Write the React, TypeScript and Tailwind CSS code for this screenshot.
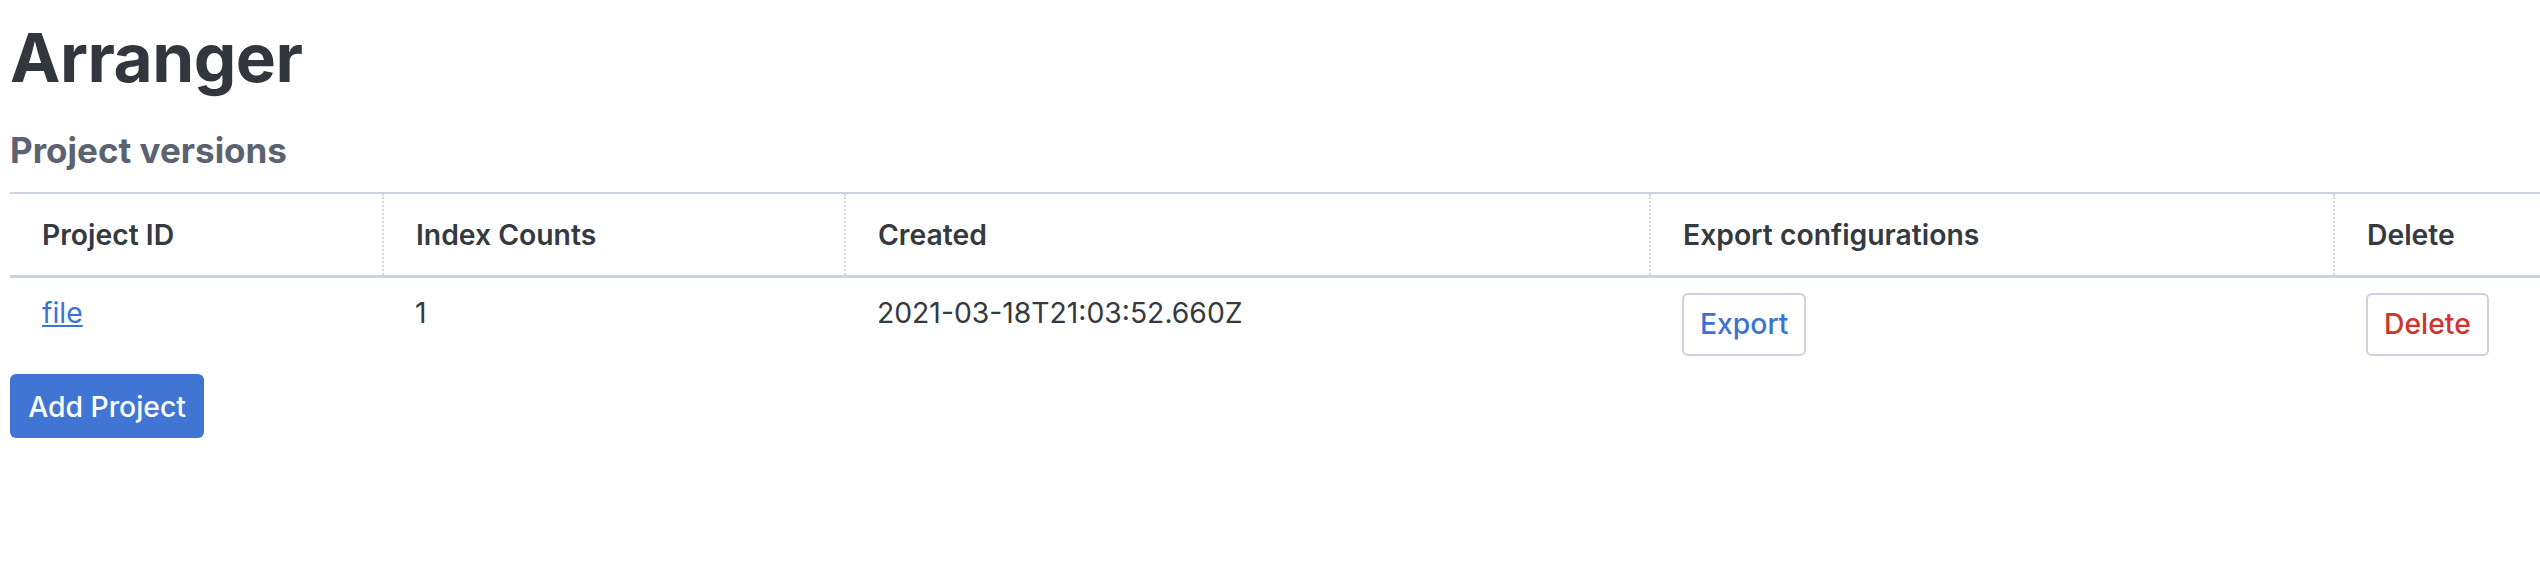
import React from "react";

export default function App() {
  const font = { fontFamily: "Inter, 'Noto Sans', sans-serif" };
  return (
    <div className="min-h-[568px] w-[2540px] bg-white text-[#343a40]" style={font}>
      <div className="pl-[10px] pt-[18px]">
        <h1 className="text-[67.5px] font-bold leading-[79px] tracking-[-0.5px] text-[#33373d]">Arranger</h1>
        <h2 className="mt-[33px] text-[35px] font-bold leading-[41px] text-[#5b6271]">Project versions</h2>
        <table className="mt-[21px] w-[2530px] border-collapse text-[28.3px] leading-[41px]">
          <thead>
            <tr className="border-t-[2px] border-b-[3px] border-[#cbd3e0]">
              <th className="w-[373px] px-[32px] pt-[21px] pb-[19px] text-left font-semibold">Project ID</th>
              <th className="w-[462px] border-l-[2px] border-dotted border-[#cfd6e2] px-[32px] pt-[21px] pb-[19px] text-left font-semibold">Index Counts</th>
              <th className="w-[805px] border-l-[2px] border-dotted border-[#cfd6e2] px-[32px] pt-[21px] pb-[19px] text-left font-semibold">Created</th>
              <th className="w-[684px] border-l-[2px] border-dotted border-[#cfd6e2] px-[32px] pt-[21px] pb-[19px] text-left font-semibold">Export configurations</th>
              <th className="border-l-[2px] border-dotted border-[#cfd6e2] px-[32px] pt-[21px] pb-[19px] text-left font-semibold">Delete</th>
            </tr>
          </thead>
          <tbody>
            <tr>
              <td className="px-[32px] pt-[15px] pb-[15px] align-top">
                <a href="#" className="text-[#3b73d3] underline">file</a>
              </td>
              <td className="px-[32px] pt-[15px] pb-[15px] align-top">1</td>
              <td className="px-[32px] pt-[15px] pb-[15px] align-top">2021-03-18T21:03:52.660Z</td>
              <td className="px-[32px] pt-[15px] pb-[15px] align-top">
                <button className="h-[63px] rounded-[6px] border-[2px] border-[#cbd3e0] bg-white px-[16px] font-medium leading-[59px] text-[#3b73d3]">Export</button>
              </td>
              <td className="px-[32px] pt-[15px] pb-[15px] align-top">
                <button className="h-[63px] rounded-[6px] border-[2px] border-[#cbd3e0] bg-white px-[16px] font-medium leading-[59px] text-[#d0342c]">Delete</button>
              </td>
            </tr>
          </tbody>
        </table>
        <button className="mt-[3px] h-[64px] w-[194px] rounded-[6px] bg-[#4175d4] pt-[2px] text-[28.3px] font-medium text-white">Add Project</button>
      </div>
    </div>
  );
}
